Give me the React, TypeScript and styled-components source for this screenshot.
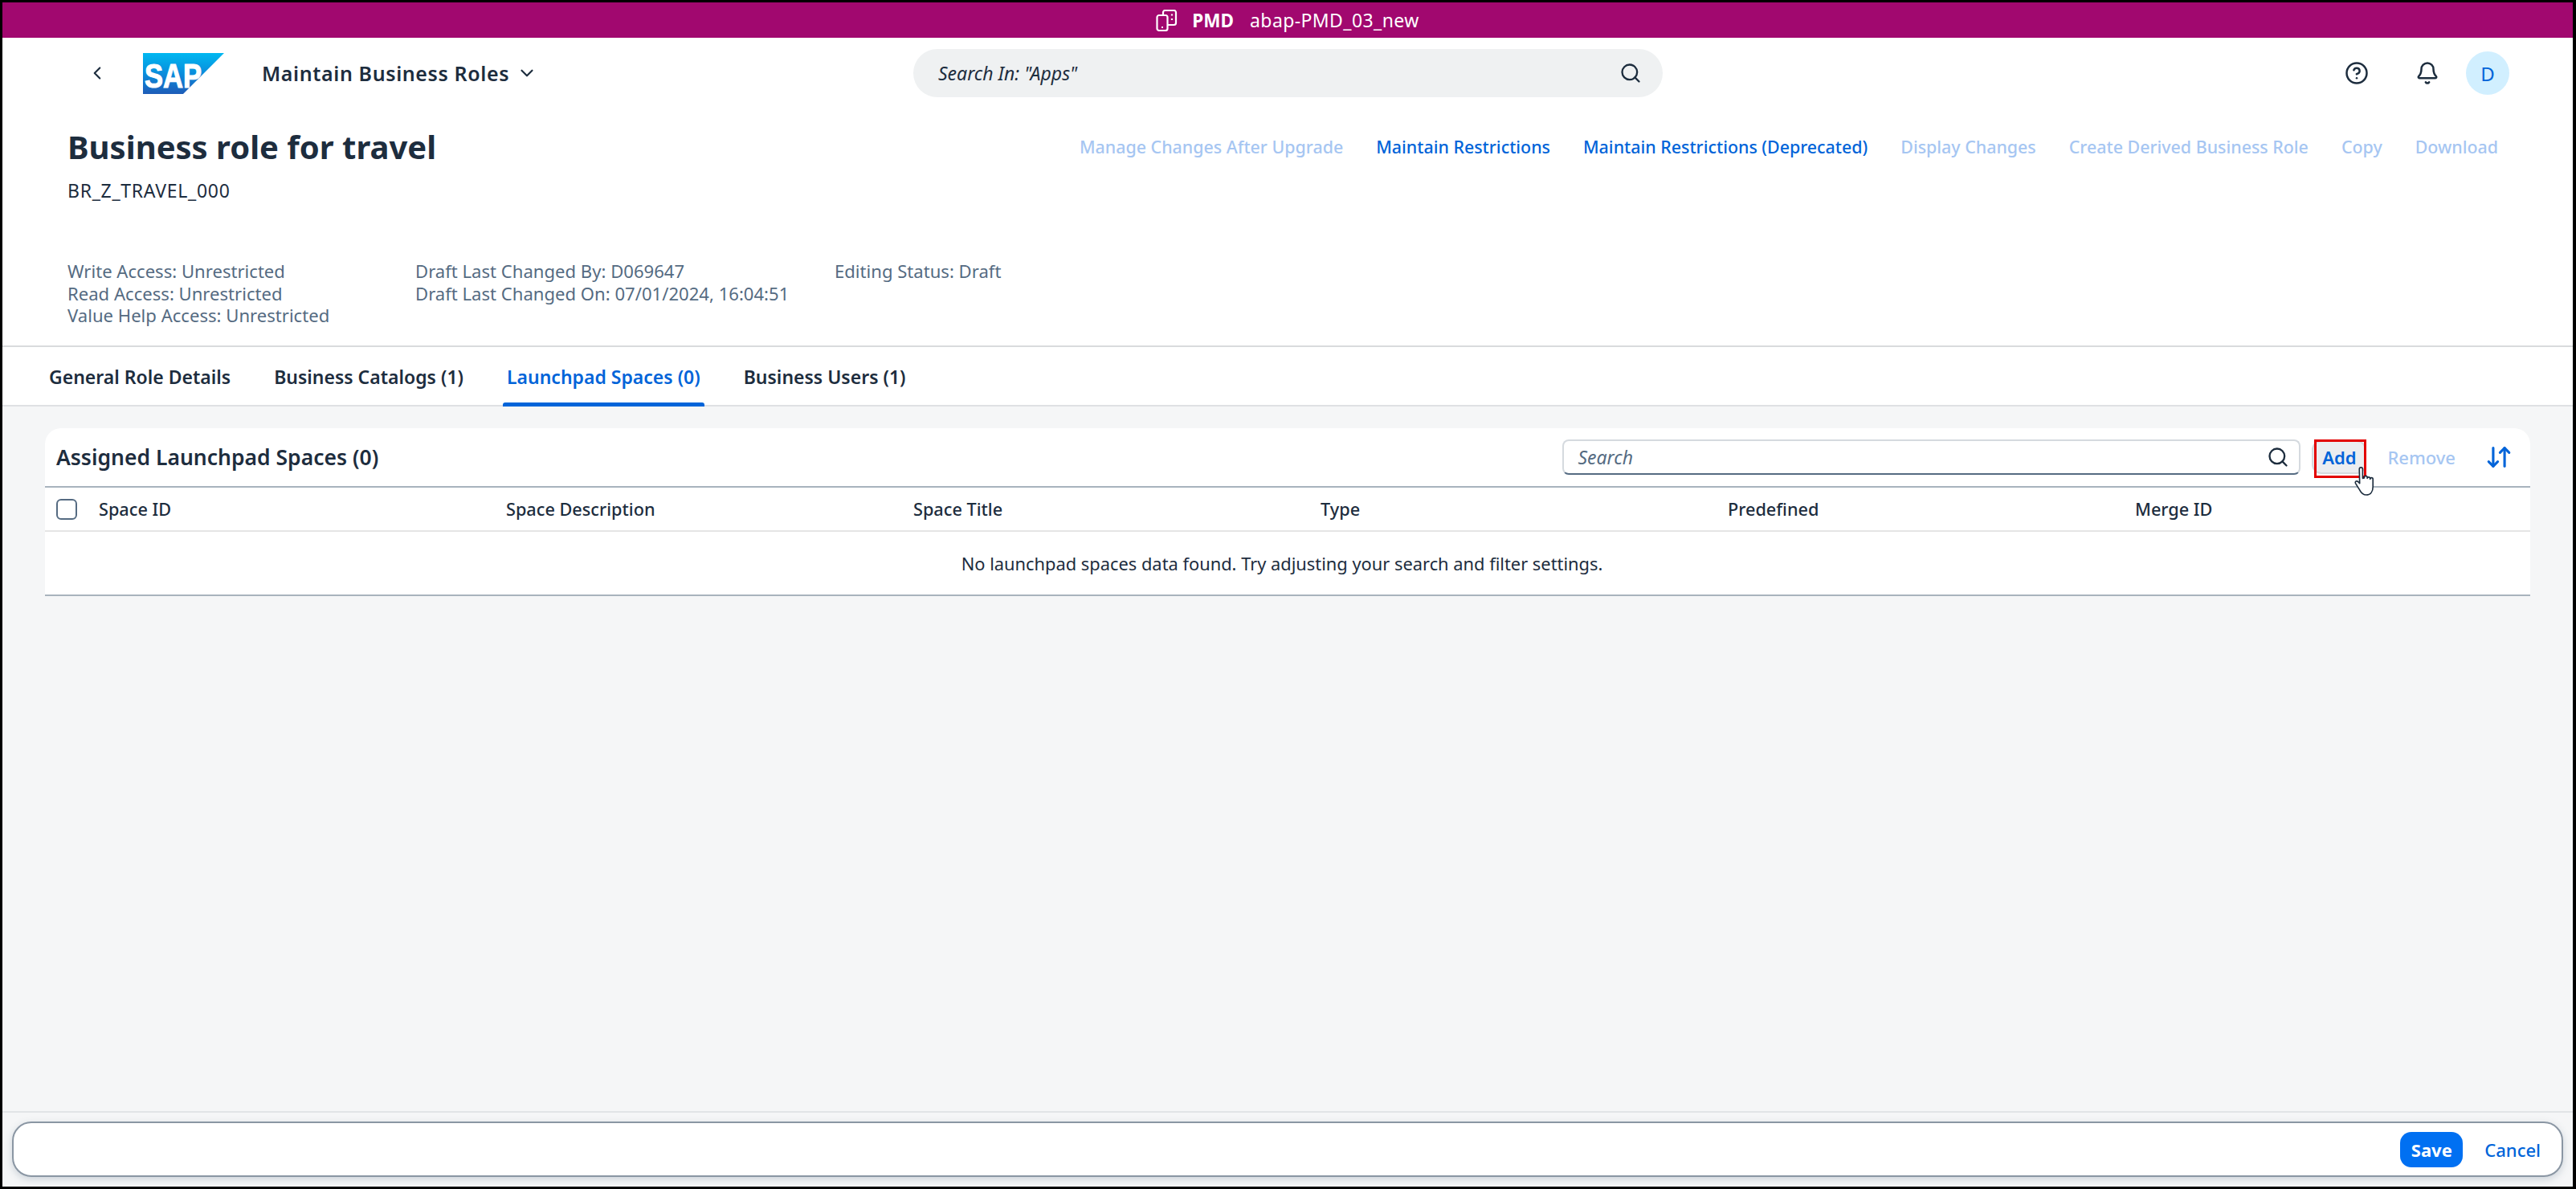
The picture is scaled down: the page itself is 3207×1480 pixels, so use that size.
import React from "react";
import styled, { createGlobalStyle } from "styled-components";
import { ArrowDownUp, Bell, ChevronDown, ChevronLeft, CircleHelp, Search } from "lucide-react";

const Global = createGlobalStyle`
  html, body { margin: 0; padding: 0; background: #000; }
  * { box-sizing: border-box; }
  body { font-family: "Noto Sans", "Open Sans", Arial, sans-serif; color: #1d2d3e; }
`;

const Frame = styled.div`
  width: 3207px;
  height: 1480px;
  border-style: solid;
  border-color: #000;
  border-width: 3px 4px 3px 3px;
  display: flex;
  flex-direction: column;
  overflow: hidden;
  position: relative;
  background: #fff;
`;

const EnvBar = styled.div`
  height: 44px;
  flex: none;
  background: #a1086f;
  color: #fff;
  display: flex;
  align-items: center;
  justify-content: center;
  font-size: 23px;
`;
const EnvName = styled.span`
  font-weight: 700;
  font-size: 22.5px;
  margin-left: 18px;
  margin-right: 20px;
`;
const EnvSystem = styled.span`
  letter-spacing: 0.4px;
`;

const ObjectHeader = styled.header`
  flex: none;
  height: 385px;
  background: #fff;
  border-bottom: 2px solid #d9dbdd;
`;

const Shell = styled.div`
  height: 88px;
  padding: 0 0 0 105px;
  display: grid;
  grid-template-columns: 70px 148px 811px 933px 1fr;
  align-items: center;
`;
const BackIcon = styled(ChevronLeft)`
  width: 26px;
  height: 26px;
  color: #1d2d3e;
`;
const LogoCell = styled.div`
  display: flex;
  align-items: center;
`;
const AppTitle = styled.div`
  display: flex;
  align-items: center;
  gap: 9px;
  font-size: 25px;
  letter-spacing: 0.6px;
  font-weight: 600;
`;
const ShellSearch = styled.div`
  height: 60px;
  border-radius: 30px;
  background: #eff1f2;
  display: flex;
  align-items: center;
  justify-content: space-between;
  padding: 0 26px 0 31px;
  font-style: italic;
  font-size: 23px;
`;
const ShellActions = styled.div`
  display: flex;
  align-items: center;
  justify-content: flex-end;
  padding-right: 79px;
`;
const HelpIcon = styled(CircleHelp)`
  width: 30px;
  height: 30px;
  margin-right: 58px;
`;
const BellIcon = styled(Bell)`
  width: 30px;
  height: 30px;
  margin-right: 33px;
`;
const Avatar = styled.div`
  width: 54px;
  height: 54px;
  border-radius: 50%;
  background: #d1efff;
  color: #0064d9;
  display: flex;
  align-items: center;
  justify-content: center;
  font-size: 24px;
`;

const TitleRow = styled.div`
  height: 70px;
  margin-top: 12px;
  padding: 0 93px 0 81px;
  display: flex;
  align-items: center;
  justify-content: space-between;
`;
const PageTitle = styled.h1`
  margin: 0;
  font-size: 40px;
  font-weight: 700;
  color: #1d2d3e;
`;
const Actions = styled.div`
  display: flex;
  gap: 41px;
`;
const ActionLink = styled.span<{ $off?: boolean }>`
  font-size: 21.4px;
  font-weight: 500;
  color: ${(p) => (p.$off ? "#a6c6f2" : "#0064d9")};
`;
const RoleId = styled.div`
  margin: 6px 0 0 81px;
  font-size: 23px;
  letter-spacing: 0.7px;
  line-height: 28px;
`;
const Meta = styled.div`
  margin: 73px 0 0 81px;
  display: grid;
  grid-template-columns: 433px 522px auto;
  font-size: 22.1px;
  line-height: 27.5px;
  color: #556b82;
`;

const Tabs = styled.nav`
  flex: none;
  height: 74px;
  background: #fff;
  padding: 1px 0 0 53px;
  display: flex;
  gap: 44px;
  border-bottom: 2px solid #dfe1e3;
`;
const Tab = styled.div<{ $active?: boolean }>`
  position: relative;
  padding: 0 5px;
  display: flex;
  align-items: center;
  font-size: 23px;
  font-weight: 600;
  color: ${(p) => (p.$active ? "#0064d9" : "#1d2d3e")};
  ${(p) =>
    p.$active &&
    `&::after {
      content: "";
      position: absolute;
      left: 0;
      right: 0;
      bottom: -2px;
      height: 5px;
      background: #0064d9;
      border-radius: 3px 3px 0 0;
    }`}
`;

const Content = styled.main`
  flex: 1;
  background: #f5f6f7;
  padding: 27px 53px 0;
`;
const Card = styled.section`
  background: #fff;
  border-radius: 20px 20px 0 0;
`;
const Toolbar = styled.div`
  height: 74px;
  padding: 0 15px 0 14px;
  display: flex;
  align-items: center;
  border-bottom: 2px solid #a8b3bd;
`;
const CardTitle = styled.h2`
  margin: 0;
  flex: 1;
  font-size: 26.5px;
  font-weight: 600;
`;
const SearchField = styled.div`
  width: 919px;
  height: 44px;
  margin-right: 14px;
  padding: 0 12px 0 17px;
  display: flex;
  align-items: center;
  justify-content: space-between;
  border: 2px solid #d5dadf;
  border-bottom-color: #556b82;
  border-radius: 8px;
  font-style: italic;
  font-size: 23px;
  color: #556b82;
`;
const SearchIcon = styled(Search)`
  width: 28px;
  height: 28px;
  color: #1d2d3e;
`;
const ShellSearchIcon = styled(Search)`
  width: 28px;
  height: 28px;
  color: #1d2d3e;
`;
const AddButton = styled.button`
  position: relative;
  width: 68px;
  height: 42px;
  padding: 0;
  background: #ebedf0;
  border: 2px solid #d5dadf;
  border-radius: 12px;
  color: #0064d9;
  font-family: inherit;
  font-size: 22px;
  font-weight: 600;
`;
const RedBox = styled.span`
  position: absolute;
  left: 1px;
  top: -3px;
  width: 65px;
  height: 48px;
  border: 3px solid #e30000;
`;
const Cursor = styled.svg`
  position: absolute;
  left: 49px;
  top: 30px;
  width: 31px;
  height: 39px;
`;
const RemoveButton = styled.span`
  margin-left: 26px;
  font-size: 22px;
  font-weight: 500;
  color: #a6c6f2;
`;
const SortIcon = styled(ArrowDownUp)`
  width: 34px;
  height: 34px;
  margin-left: 37px;
  margin-right: 7px;
  color: #0064d9;
`;
const HeaderRow = styled.div`
  height: 55px;
  display: grid;
  grid-template-columns: 67px repeat(5, 507px) 1fr;
  align-items: center;
  border-bottom: 2px solid #e5e5e5;
  font-size: 21.7px;
  font-weight: 500;
`;
const CheckCell = styled.div`
  padding-left: 14px;
  display: flex;
`;
const Checkbox = styled.span`
  width: 26px;
  height: 26px;
  background: #fff;
  border: 2px solid #556b82;
  border-radius: 6px;
`;
const EmptyRow = styled.div`
  height: 80px;
  display: flex;
  align-items: center;
  justify-content: center;
  border-bottom: 2px solid #a8b3bd;
  font-size: 21.85px;
  padding-right: 14px;
`;

const Footer = styled.footer`
  flex: none;
  height: 94px;
  padding: 11px 12px 12px;
  background: #f5f6f7;
  border-top: 2px solid #e1e4e6;
`;
const FooterBar = styled.div`
  height: 69px;
  padding-right: 26px;
  display: flex;
  align-items: center;
  justify-content: flex-end;
  gap: 27px;
  background: #fff;
  border: 2px solid #8a96a3;
  border-radius: 24px;
  box-shadow: 0 3px 10px rgba(85, 107, 130, 0.25);
`;
const SaveButton = styled.button`
  width: 78px;
  height: 44px;
  border: 0;
  padding: 0;
  border-radius: 14px;
  background: #0070f2;
  color: #fff;
  font-family: inherit;
  font-size: 22px;
  font-weight: 700;
`;
const CancelButton = styled.span`
  font-size: 22px;
  font-weight: 500;
  color: #0064d9;
`;

const SapLogo = () => (
  <svg width="101" height="51" viewBox="0 0 101 51">
    <defs>
      <linearGradient id="sapGrad" x1="0" y1="0" x2="0" y2="1">
        <stop offset="0" stopColor="#00b8f1" />
        <stop offset="0.5" stopColor="#0a8ddc" />
        <stop offset="1" stopColor="#1e5cb8" />
      </linearGradient>
    </defs>
    <polygon points="0,0 101,0 50,51 0,51" fill="url(#sapGrad)" />
    <text x="2" y="43" fontFamily="Liberation Sans" fontWeight="700" fontSize="43" fill="#fff" stroke="#fff" strokeWidth="1.2" textLength="71" lengthAdjust="spacingAndGlyphs">
      SAP
    </text>
  </svg>
);

const DevicesIcon = () => (
  <svg width="27" height="27" viewBox="0 0 27 27" fill="none" stroke="#fff" strokeWidth="2.2">
    <rect x="1.5" y="7" width="13" height="19" rx="2.5" />
    <path d="M9 7V3.5A2.5 2.5 0 0 1 11.5 1h11A2.5 2.5 0 0 1 25 3.5v13a2.5 2.5 0 0 1-2.5 2.5H14.5" />
    <path d="M7 22h2M20 5.5v2M20 11v2" />
  </svg>
);

export default function App() {
  return (
    <>
      <Global />
      <Frame>
        <EnvBar>
          <DevicesIcon />
          <EnvName>PMD</EnvName>
          <EnvSystem>abap-PMD_03_new</EnvSystem>
        </EnvBar>
        <ObjectHeader>
          <Shell>
            <BackIcon />
            <LogoCell>
              <SapLogo />
            </LogoCell>
            <AppTitle>
              Maintain Business Roles
              <ChevronDown size={26} />
            </AppTitle>
            <ShellSearch>
              <span>Search In: "Apps"</span>
              <ShellSearchIcon />
            </ShellSearch>
            <ShellActions>
              <HelpIcon />
              <BellIcon />
              <Avatar>D</Avatar>
            </ShellActions>
          </Shell>
          <TitleRow>
            <PageTitle>Business role for travel</PageTitle>
            <Actions>
              <ActionLink $off>Manage Changes After Upgrade</ActionLink>
              <ActionLink>Maintain Restrictions</ActionLink>
              <ActionLink>Maintain Restrictions (Deprecated)</ActionLink>
              <ActionLink $off>Display Changes</ActionLink>
              <ActionLink $off>Create Derived Business Role</ActionLink>
              <ActionLink $off>Copy</ActionLink>
              <ActionLink $off>Download</ActionLink>
            </Actions>
          </TitleRow>
          <RoleId>BR_Z_TRAVEL_000</RoleId>
          <Meta>
            <div>
              <div>Write Access: Unrestricted</div>
              <div>Read Access: Unrestricted</div>
              <div>Value Help Access: Unrestricted</div>
            </div>
            <div>
              <div>Draft Last Changed By: D069647</div>
              <div>Draft Last Changed On: 07/01/2024, 16:04:51</div>
            </div>
            <div>Editing Status: Draft</div>
          </Meta>
        </ObjectHeader>
        <Tabs>
          <Tab>General Role Details</Tab>
          <Tab>Business Catalogs (1)</Tab>
          <Tab $active>Launchpad Spaces (0)</Tab>
          <Tab>Business Users (1)</Tab>
        </Tabs>
        <Content>
          <Card>
            <Toolbar>
              <CardTitle>Assigned Launchpad Spaces (0)</CardTitle>
              <SearchField>
                <span>Search</span>
                <SearchIcon />
              </SearchField>
              <AddButton>
                Add
                <RedBox />
                <Cursor viewBox="0 0 30 36" fill="#fff" stroke="#1d2d3e" strokeWidth="1.6" strokeLinejoin="round">
                  <path d="M8 3a2 2 0 0 1 4 0v11l2-.5v-1a1.8 1.8 0 0 1 3.5 0v1.500a1.800 1.800 0 0 1 3.500 0v1a1.700 1.700 0 0 1 3.400 0V24c0 6-3 10-8 10-4 0-6-2-8-6l-5-8c-1-2 1-3.500 3-2l2 2z" />
                </Cursor>
              </AddButton>
              <RemoveButton>Remove</RemoveButton>
              <SortIcon strokeWidth={2.2} />
            </Toolbar>
            <HeaderRow>
              <CheckCell>
                <Checkbox />
              </CheckCell>
              <div>Space ID</div>
              <div>Space Description</div>
              <div>Space Title</div>
              <div>Type</div>
              <div>Predefined</div>
              <div>Merge ID</div>
            </HeaderRow>
            <EmptyRow>No launchpad spaces data found. Try adjusting your search and filter settings.</EmptyRow>
          </Card>
        </Content>
        <Footer>
          <FooterBar>
            <SaveButton>Save</SaveButton>
            <CancelButton>Cancel</CancelButton>
          </FooterBar>
        </Footer>
      </Frame>
    </>
  );
}
